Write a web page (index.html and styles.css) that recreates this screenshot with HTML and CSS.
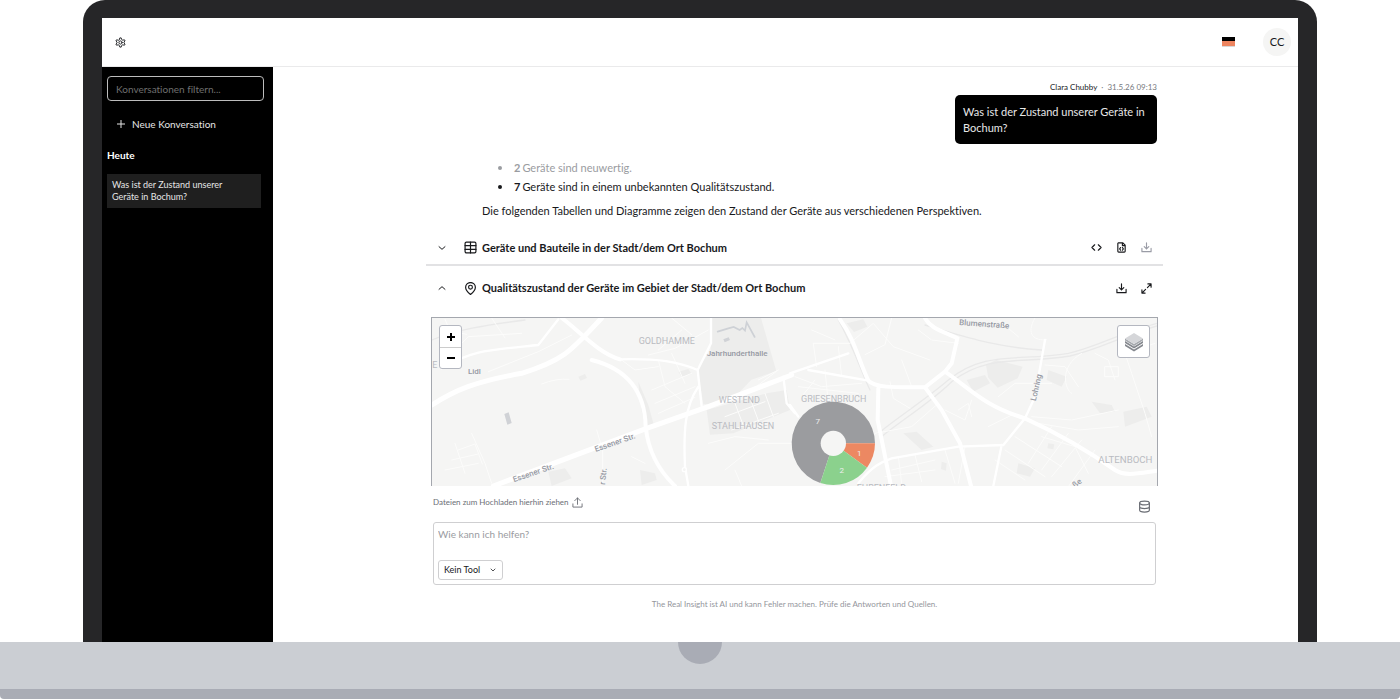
FILE: index.html
```html
<!DOCTYPE html>
<html lang="de">
<head>
<meta charset="utf-8">
<title>The Real Insight</title>
<meta name="viewport" content="width=device-width, initial-scale=1">
<link rel="stylesheet" href="styles.css">
</head>
<body>
<div class="laptop">
  <div class="lid">
    <div class="screen">
      <header class="topbar">
        <button class="icon-button" type="button" aria-label="Einstellungen">
          <svg class="icon icon-md" viewBox="0 0 24 24"><path d="M9.500 5.500L10.500 2h3l1 3.500 2.500 1.500 3.500-1 1.500 2.700L19.500 11v2l2.500 2.300-1.500 2.700-3.500-1-2.500 1.500-1 3.500h-3l-1-3.500L7 17l-3.500 1L2 15.300 4.500 13v-2L2 8.700 3.500 6 7 7z"/><circle cx="12" cy="12" r="3.500"/></svg>
        </button>
        <div class="topbar-right">
          <button class="flag" type="button" aria-label="Sprache: Deutsch"><span class="flag-black"></span><span class="flag-red"></span><span class="flag-gold"></span></button>
          <button class="avatar" type="button">CC</button>
        </div>
      </header>
      <div class="workspace">
        <aside class="sidebar">
          <input class="filter" type="text" placeholder="Konversationen filtern..." aria-label="Konversationen filtern">
          <button class="new-chat" type="button">
            <svg class="icon icon-sm" viewBox="0 0 24 24"><path d="M12 1v22M1 12h22"/></svg>
            Neue Konversation
          </button>
          <h2 class="group-title">Heute</h2>
          <a class="conversation" href="#">Was ist der Zustand unserer Geräte in Bochum?</a>
        </aside>
        <main class="main">
          <div class="column">
            <section class="question">
              <p class="meta"><span class="author">Clara Chubby</span><span>·</span><time>31.5.26 09:13</time></p>
              <p class="bubble">Was ist der Zustand unserer Geräte in Bochum?</p>
            </section>
            <section class="answer">
              <ul class="facts">
                <li class="faded"><strong>2</strong> Geräte sind neuwertig.</li>
                <li><strong>7</strong> Geräte sind in einem unbekannten Qualitätszustand.</li>
              </ul>
              <p class="summary">Die folgenden Tabellen und Diagramme zeigen den Zustand der Geräte aus verschiedenen Perspektiven.</p>
            </section>
            <section class="panel panel-closed">
              <button class="icon-button" type="button" aria-label="Aufklappen"><svg class="icon icon-sm" viewBox="0 0 24 24"><path d="M3 8l9 8 9-8"/></svg></button>
              <svg class="icon icon-lg" viewBox="0 0 24 24"><rect x="2" y="2" width="20" height="20" rx="2.500"/><path d="M2 8.500h20M2 15.500h20M12 2v20"/></svg>
              <h3 class="panel-title">Geräte und Bauteile in der Stadt/dem Ort Bochum</h3>
              <div class="actions">
                <button class="icon-button" type="button" aria-label="Code"><svg class="icon icon-md" viewBox="0 0 24 24"><path d="M8 6l-6 6 6 6M16 6l6 6-6 6"/></svg></button>
                <button class="icon-button" type="button" aria-label="Datei"><svg class="icon icon-md" viewBox="0 0 24 24"><path d="M5 2h10l5 5v13q0 2-2 2H6q-2 0-2-2V3zM14 2v6h6M10 12l-2 3 2 3M14 12l2 3-2 3"/></svg></button>
                <button class="icon-button muted" type="button" aria-label="Herunterladen"><svg class="icon icon-md" viewBox="0 0 24 24"><path d="M12 2v13M7 10l5 5 5-5M2 14v7h20v-7"/></svg></button>
              </div>
            </section>
            <section class="panel">
              <button class="icon-button" type="button" aria-label="Zuklappen"><svg class="icon icon-sm" viewBox="0 0 24 24"><path d="M3 16l9-8 9 8"/></svg></button>
              <svg class="icon icon-lg" viewBox="0 0 24 24"><path d="M12 23s9-7 9-13.500a9 8.500 0 0 0-18 0c0 6.500 9 13.500 9 13.500z"/><circle cx="12" cy="9.500" r="3.500"/></svg>
              <h3 class="panel-title">Qualitätszustand der Geräte im Gebiet der Stadt/dem Ort Bochum</h3>
              <div class="actions">
                <button class="icon-button" type="button" aria-label="Herunterladen"><svg class="icon icon-md" viewBox="0 0 24 24"><path d="M12 2v13M7 10l5 5 5-5M2 14v7h20v-7"/></svg></button>
                <button class="icon-button" type="button" aria-label="Vollbild"><svg class="icon icon-md" viewBox="0 0 24 24"><path d="M15 2h7v7M22 2l-8 8M9 22H2v-7M2 22l8-8"/></svg></button>
              </div>
            </section>
            <div class="map">
              <svg class="map-canvas" viewBox="21 24 2175 504" preserveAspectRatio="xMidYMin slice" role="img" aria-label="Karte von Bochum">
                <g class="land">
                  <path d="M858 24h150l46 160-75 25-66 70-78 4-18-110 40-50z"/>
                  <path d="M845 300l180-50 60-10 10 60-170 70-70 4z"/>
                  <path d="M640 215l30 70 18 65-28 5-15-80z"/>
                  <path d="M370 485l50-10 20 30-60 23zM645 480l45 10 5 20-45 15zM460 200l20-8 6 12-20 8zM760 185l30-8 10 15-30 8z"/>
                  <path d="M1265 40l50-12 12 22-40 16zM1683 165l30-15 80 20-15 35-60 28-28-30zM1625 210l55-15 15 25-50 25zM1870 180l55 20-15 30-45-20zM2000 275l60 10 10 20-45 5zM2095 305l70-15 15 30-80 30zM1435 370l40-5 50 45-35 10zM1780 460l50 15-15 25-40-10zM1550 455l15 5-2 22-15-5zM1870 400l18 3-3 15-18-3z"/>
                </g>
                <g class="rail">
                  <path d="M1360 370C1420 320 1500 270 1570 210C1680 120 1780 155 1930 130C2020 110 2080 70 2196 40"/>
                  <path d="M1372 378C1430 330 1520 275 1580 215C1690 130 1790 163 1935 138C2030 115 2090 78 2196 48"/>
                  <path d="M21 90C90 60 180 45 300 30M1240 30C1290 120 1310 190 1335 240M1500 45C1620 80 1700 110 1850 120"/>
                </g>
                <g class="lane">
                  <path d="M60 28l15 35 50 10M190 185l150-60 100-50M90 120l40-40 160-10M200 24l40 60M350 222q45-18 82-14M140 370l40 90 20 60M100 420l50-18 22 60M80 450l80-18M60 480l100-20M90 400l30 90M515 360l18 60 0 100M620 440l40 20M850 60l-100 55-80 20M700 150l20 80 60 50M680 240l120-50M690 280l120-50M700 310l110-48M740 130l40 90M590 150l40 30 70-10M770 60l-70 60M740 24l60 50M900 320l120-45M920 360l140-50M930 280l30 80M975 265l30 80M1020 250l25 70M850 400l80-20 100 10M900 480l100-80 100 0M930 480l20 48M980 240l80-60M1000 210l60-30"/>
                  <path d="M1165 100l110 0 70-60 60 70 110 40M1165 100l10 70M1250 200l-10-90M1160 60l70 30M1110 200l80 30 120-10M1120 230l180 20M1130 260l40-50M1200 180l10 100M1400 24l-20 80-60 30M1395 215l10 50 50 30M1430 150l30 80M1480 60l40 30 80 10M1500 240l40 40-80 70-110 20M1560 300l60 30 20-60M1380 450l20 70M1420 440l10 80M1470 435l20 80M1400 480l130-30M1380 500l150-20M1600 300l30-20 10 40M1690 350l80-40 30 20M1720 260l50-40 110 0M1780 80l-60-50M1830 24c-30 50 0 70 35 65M1860 165l60 5 40 60M1970 130c-70 40-50 110-30 120M2010 130l40 20 20 60M2040 200h40v-30h-40zM2100 130l20 60 40 120 20 70M2100 130l90-30M1820 320l120 10 140-30M1840 340l120 20 120-10M1850 380l100 30 40 80M1880 350l-70 110M1930 370l-80 110M1970 390l-90 110M2010 420l-80 110M1740 420l120 80M1770 380l140 90M1710 450l90 60M1560 420l30 100M1620 410l-20 110"/>
                </g>
                <g class="street">
                  <path d="M50 175C140 120 190 120 340 105L400 28M585 148C700 145 760 155 818 180L858 100L858 24M818 180L830 290M820 230C780 290 775 360 780 470L790 528M1075 200L1085 280L1110 310M1095 285L1120 320"/>
                  <path d="M1095 190L1270 130M1150 180L1330 212M1300 520C1340 470 1370 455 1400 445L1600 410L1735 405L1800 325L1830 260L1860 90M1730 405L1705 528"/>
                </g>
                <g class="road">
                  <path d="M410 24C460 60 520 130 585 148M1245 28C1290 90 1300 150 1330 212C1350 235 1420 232 1500 232L1560 185L1580 160L1597 85C1560 65 1520 60 1500 24M1500 232L1550 300L1605 400L1638 528M1360 235L1358 330L1398 528M1560 185C1640 240 1680 290 1800 325C1920 380 2000 430 2070 480C2100 500 2140 490 2196 482"/>
                  <path d="M500 150C620 180 660 260 662 350C670 430 710 490 750 528"/>
                </g>
                <g class="highway">
                  <path d="M21 285C90 240 150 215 290 190C420 150 440 120 530 24"/>
                  <path d="M205 528L665 355L850 290L1100 195"/>
                </g>
                <circle class="roundabout" cx="778" cy="479" r="6"/>
                <g class="building">
                  <path d="M238 312l13-5 9 32-13 5zM895 88l16-6 4 8-16 7z"/>
                  <path class="roof" d="M878 65l32-10 16-4 18 9 8-6 8 8 5-25 24 44"/>
                </g>
                <g class="district">
                  <text x="641" y="102">GOLDHAMME</text>
                  <text x="22" y="173">E</text>
                  <text x="881" y="280">WESTEND</text>
                  <text x="860" y="357">STAHLHAUSEN</text>
                  <text x="1128" y="276">GRIESENBRUCH</text>
                  <text class="wide" x="2020" y="460">ALTENBOCH</text>
                  <text x="1295" y="543">EHRENFELD</text>
                </g>
                <g class="place">
                  <text x="845" y="138">Jahrhunderthalle</text>
                  <text x="129" y="192">Lidl</text>
                  <text transform="translate(512 426) rotate(-19)">Essener Str.</text>
                  <text transform="translate(267 517) rotate(-19)">Essener Str.</text>
                  <text transform="translate(540 525) rotate(-84)">r Str.</text>
                  <text transform="translate(1602 45) rotate(4)">Blumenstraße</text>
                  <text transform="translate(1832 274) rotate(-77)">Lohring</text>
                  <text transform="translate(1950 534) rotate(-38)">ße</text>
                </g>
                <g class="donut">
                  <path class="unknown" d="M1225 400L1186 519A125 125 0 1 1 1350 400z"/>
                  <path class="bad" d="M1225 400H1350A125 125 0 0 1 1326 473z"/>
                  <path class="good" d="M1225 400L1326 473A125 125 0 0 1 1186 519z"/>
                  <circle class="hole" cx="1225" cy="400" r="38"/>
                  <text x="1178" y="343">7</text>
                  <text x="1303" y="437">1</text>
                  <text x="1250" y="488">2</text>
                </g>
              </svg>
              <div class="zoom">
                <button class="zoom-button" type="button" aria-label="Vergrößern"><svg class="icon-zoom" viewBox="0 0 10 10"><path d="M5 1v8M1 5h8"/></svg></button>
                <button class="zoom-button" type="button" aria-label="Verkleinern"><svg class="icon-zoom" viewBox="0 0 10 10"><path d="M1 5h8"/></svg></button>
              </div>
              <button class="layers" type="button" aria-label="Ebenen">
                <svg class="layers-icon" viewBox="0 0 20 20"><path class="layer-low" d="M1 12l9 5.500 9-5.500v2l-9 5.500-9-5.500z"/><path class="layer-low" d="M1 9l9 5.500 9-5.500v2l-9 5.500L1 11z"/><path class="layer-mid" d="M1 6.500l9 5.500 9-5.500v2L10 14 1 8.500z"/><path class="layer-top" d="M10 1l9 5.500-9 5.500-9-5.500z"/></svg>
              </button>
            </div>
            <form class="composer">
              <div class="composer-top">
                <button class="upload" type="button">Dateien zum Hochladen hierhin ziehen
                  <svg class="icon icon-md" viewBox="0 0 24 24"><path d="M12 16V2M6 8l6-6 6 6M2 15v7h20v-7"/></svg></button>
                <button class="icon-button database" type="button" aria-label="Datenquelle"><svg class="icon icon-lg" viewBox="0 0 24 24"><ellipse cx="12" cy="5.500" rx="9" ry="3.500"/><path d="M3 5.500v13c0 5 18 5 18 0v-13M3 12c0 5 18 5 18 0"/></svg></button>
              </div>
              <div class="prompt">
                <textarea class="prompt-text" rows="1" placeholder="Wie kann ich helfen?" aria-label="Nachricht"></textarea>
                <div class="tool">
                  <select class="tool-select" aria-label="Tool"><option>Kein Tool</option></select>
                  <svg class="icon tool-chevron" viewBox="0 0 24 24"><path d="M4 8l8 8 8-8"/></svg>
                </div>
              </div>
              <p class="disclaimer">The Real Insight ist AI und kann Fehler machen. Prüfe die Antworten und Quellen.</p>
            </form>
          </div>
        </main>
      </div>
    </div>
  </div>
  <div class="base"><div class="notch"></div></div>
</div>
</body>
</html>
```
FILE: styles.css
```css
* { box-sizing: border-box; }
body { margin: 0; background: #fff; color: #18191c; font-family: Lato, "Liberation Sans", sans-serif; font-size: 11px; line-height: 16px; font-variant-ligatures: none; }
h2, h3, p, ul { margin: 0; padding: 0; }
button, input, textarea, select { font: inherit; font-variant-ligatures: none; color: inherit; margin: 0; padding: 0; border: 0; background: none; }
svg { display: block; flex: none; }

.laptop { display: flex; flex-direction: column; height: 100vh; }
.lid { flex: 1; min-height: 0; display: flex; margin: 0 83px; padding: 18px 19px 0; background: #262628; border-radius: 22px 22px 0 0; }
.screen { flex: 1; min-width: 0; display: flex; flex-direction: column; background: #fff; }
.base { display: flex; justify-content: center; height: 57px; background: #cbced3; border-bottom: 10px solid #a9acb5; border-radius: 0 0 4px 4px; }
.notch { width: 44px; height: 22px; background: #a9acb5; border-radius: 0 0 22px 22px; }

.icon { fill: none; stroke: currentColor; stroke-width: 2; stroke-linecap: round; stroke-linejoin: round; }
.icon-sm { width: 8px; height: 8px; stroke-width: 3; }
.icon-md { width: 11px; height: 11px; stroke-width: 2.5; }
.icon-lg { width: 13px; height: 13px; stroke-width: 2.2; }
.icon-button { display: flex; }

.topbar { display: flex; align-items: center; justify-content: space-between; height: 49px; padding: 0 7px 0 13px; border-bottom: 1px solid #eaeaeb; }
.topbar .icon-md { stroke-width: 2; }
.topbar-right { display: flex; align-items: center; gap: 28px; }
.flag { display: flex; flex-direction: column; width: 13px; height: 10px; }
.flag span { width: 100%; }
.flag-black { height: 4px; background: #000; }
.flag-red { height: 5px; background: #ee8560; }
.flag-gold { height: 1px; background: #d8d8d8; }
.avatar { width: 28px; height: 28px; border-radius: 50%; background: #f5f5f4; font-size: 11px; }

.workspace { flex: 1; min-height: 0; display: flex; }
.sidebar { width: 171px; flex: none; padding: 9px 9px 0 5px; background: #000; color: #e6e6e6; display: flex; flex-direction: column; align-items: stretch; }
.filter { height: 25px; padding: 0 8px; border: 1px solid #bdbdbd; border-radius: 4px; font-size: 10px; }
.filter::placeholder { color: #6f6f6f; opacity: 1; }
.new-chat { display: flex; align-items: center; gap: 7px; margin-top: 15px; padding-left: 10px; font-size: 10px; }
.group-title { margin-top: 15px; font-size: 10px; font-weight: 700; color: #fff; }
.conversation { margin: 11px 3px 0 0; padding: 5px 30px 5px 5px; background: #1f1f1f; color: #e6e6e6; font-size: 9px; line-height: 12px; text-decoration: none; }

.main { flex: 1; min-width: 0; display: flex; justify-content: center; padding-left: 18px; }
.column { display: flex; flex-direction: column; width: 100%; max-width: 737px; }
.question { display: flex; flex-direction: column; align-items: flex-end; padding: 13px 6px 0; }
.meta { display: flex; gap: 4px; font-size: 8px; line-height: 14px; color: #777a80; }
.author { color: #18191c; }
.bubble { width: 202px; margin-top: 1px; padding: 9px 8px 8px; border-radius: 5px; background: #000; color: #e8e8e8; }
.answer { padding: 14px 56px 0; }
.facts { list-style: none; padding-left: 16px; }
.facts li { display: flex; gap: 2px; line-height: 19px; }
.facts li::before { content: ""; width: 4px; height: 4px; margin: 8px 10px 0 0; border-radius: 50%; background: currentColor; }
.faded { color: #9a9ca1; }
.summary { margin-top: 7px; }

.panel { display: flex; align-items: center; height: 44px; padding: 0 11px 0 12px; }
.panel-closed { height: 35px; margin-top: 12px; border-bottom: 2px solid #e2e2e4; }
.panel .icon-lg { margin: 0 5px 0 18px; }
.panel-title { flex: 1; font-size: 11px; font-weight: 700; }
.actions { display: flex; gap: 14px; }
.muted { color: #9a9ca6; }

.map { position: relative; flex: 1; min-height: 0; margin: 7px 5px 0; border: solid #a4a7ae; border-width: 1px 1px 0; overflow: hidden; }
.map-canvas { width: 100%; height: 100%; background: #f5f5f4; }
.map-canvas path { fill: none; stroke: #fff; stroke-linecap: round; }
.map-canvas .land path { fill: #ededec; stroke: none; }
.map-canvas .rail path { stroke: #e9e9e9; stroke-width: 4; }
.map-canvas .lane path { stroke: #fcfcfb; stroke-width: 3; }
.map-canvas .street path { stroke-width: 7; }
.map-canvas .road path { stroke-width: 12; }
.map-canvas .highway path { stroke-width: 15; }
.map-canvas .building path { fill: #d0d2d6; stroke: none; }
.map-canvas .building .roof { fill: none; stroke: #ced1d6; stroke-width: 5; }
.roundabout { fill: #f5f5f4; stroke: #fff; stroke-width: 4; }
.map-canvas text { font-family: Roboto, sans-serif; font-size: 24px; }
.map-canvas .district text { fill: #b9bbc1; font-size: 27px; }
.map-canvas .district .wide { font-size: 29px; }
.map-canvas .place text { fill: #9699a3; font-weight: 500; }
.map-canvas .donut path { stroke: none; }
.map-canvas .donut .unknown { fill: #9b9c9f; }
.map-canvas .donut .bad { fill: #ec8862; }
.map-canvas .donut .good { fill: #8bd18d; }
.hole { fill: #f5f5f4; }
.map-canvas .donut text { fill: #eee; text-anchor: middle; }
.zoom { position: absolute; left: 7px; top: 7px; display: flex; flex-direction: column; width: 23px; border: 1px solid #b4b7c0; border-radius: 3px; background: #fff; color: #000; }
.zoom-button { display: flex; align-items: center; justify-content: center; height: 21px; }
.zoom-button + .zoom-button { border-top: 1px solid #ccc; }
.icon-zoom { width: 10px; height: 10px; }
.icon-zoom path { stroke: #000; stroke-width: 2; }
.layers { position: absolute; right: 7px; top: 7px; display: flex; align-items: center; justify-content: center; width: 33px; height: 33px; border: 1px solid #b4b7c0; border-radius: 3px; background: #fff; }
.layers-icon { width: 20px; height: 20px; }
.layer-low { fill: #85888e; }
.layer-mid { fill: #a5a8ad; }
.layer-top { fill: #d5d6d9; }

.composer { padding: 8px 7px 30px; }
.composer-top { display: flex; align-items: flex-start; justify-content: space-between; height: 28px; padding-right: 5px; color: #6b6e75; }
.upload { display: flex; align-items: center; gap: 3px; font-size: 8px; line-height: 16px; }
.composer-top .icon-md { stroke-width: 2; }
.database { margin-top: 6px; }
.prompt { display: flex; flex-direction: column; align-items: stretch; border: 1px solid #cfcfd1; border-radius: 3px; padding: 4px; }
.prompt-text { height: 33px; resize: none; outline: none; font-size: 10px; line-height: 14px; }
.prompt-text::placeholder { color: #9a9ca1; opacity: 1; }
.tool { position: relative; width: 65px; }
.tool-select { display: block; width: 100%; height: 20px; padding: 0 20px 0 5px; border: 1px solid #cfcfd1; border-radius: 3px; appearance: none; background: #fff; font-size: 9px; }
.tool-chevron { position: absolute; right: 7px; top: 7px; width: 6px; height: 6px; stroke-width: 3; pointer-events: none; }
.disclaimer { margin-top: 11px; text-align: center; font-size: 8px; color: #94969c; }
```
